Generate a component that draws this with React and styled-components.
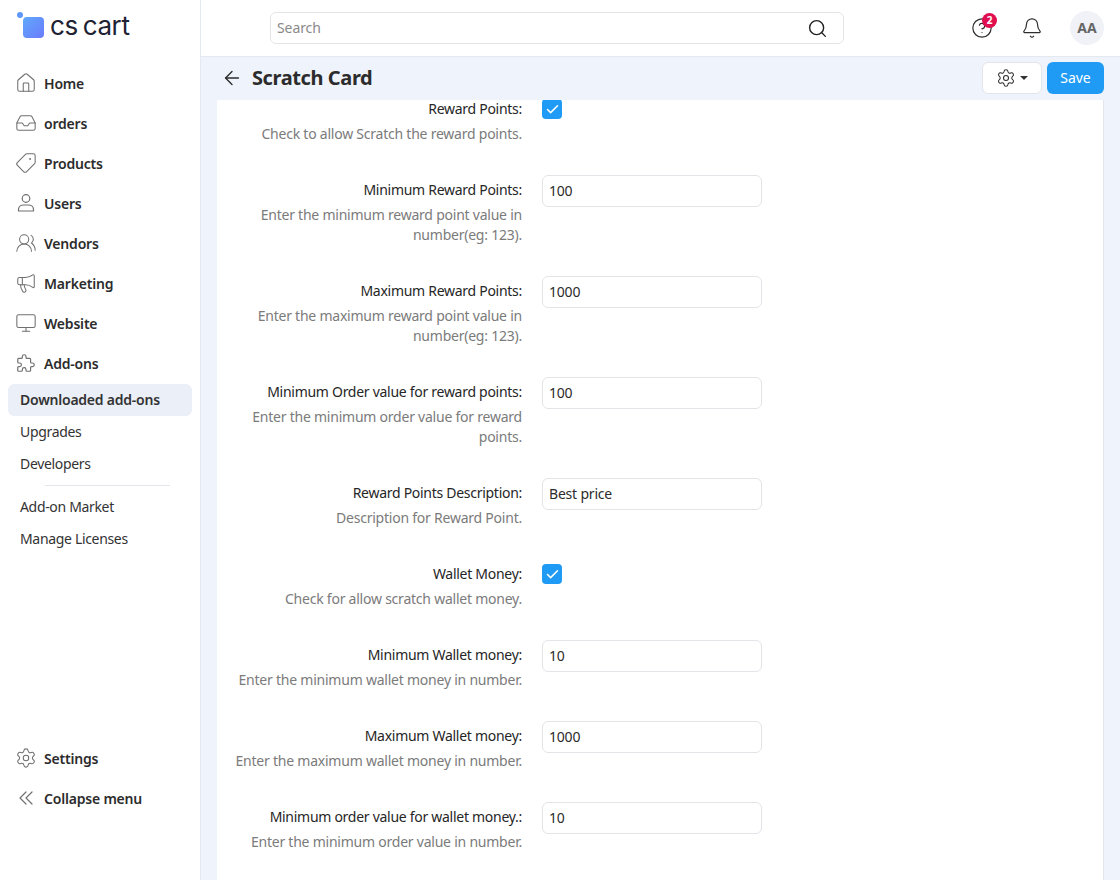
import React from 'react';
import styled, { createGlobalStyle } from 'styled-components';
import {
  House, Inbox, Tag, UsersRound, Megaphone, Monitor, Settings,
  Search, Bell, ArrowLeft, Check, CircleHelp,
} from 'lucide-react';

const GlobalStyle = createGlobalStyle`
  html, body { margin: 0; padding: 0; height: 100%; overflow: hidden; }
  body { font-family: "Noto Sans", "Open Sans", sans-serif; font-size: 14px; color: #2c2c2c; background: #fff; }
  #root { height: 100%; }
  * { box-sizing: border-box; }
`;

const Shell = styled.div`
  display: flex;
  height: 880px;
  width: 1120px;
`;

const Sidebar = styled.aside`
  width: 201px;
  flex: none;
  display: flex;
  flex-direction: column;
  background: #fff;
  border-right: 1px solid #e4e8f1;
  padding: 0 8px;
`;

const Logo = styled.div`
  height: 63px;
  display: flex;
  align-items: flex-start;
  padding: 10px 0 0 8px;
  gap: 6px;
`;

const LogoMark = styled.div`
  position: relative;
  width: 21px;
  height: 21px;
  margin: 7px 0 0 7px;
  border-radius: 4px;
  background: linear-gradient(135deg, #5fa9fb, #6b7bfb);

  &::before {
    content: '';
    position: absolute;
    left: -6px;
    top: -5px;
    width: 6px;
    height: 6px;
    border-radius: 50%;
    background: #5f97f7;
  }
`;

const LogoText = styled.span`
  font-family: Inter, sans-serif;
  font-size: 26px;
  line-height: 32px;
  letter-spacing: -0.4px;
  word-spacing: -2px;
  color: #1e2233;
`;

const NavItem = styled.div`
  display: flex;
  align-items: center;
  gap: 7px;
  height: 40px;
  padding-left: 7px;
  font-weight: 600;
  font-size: 14px;
  letter-spacing: -0.2px;
  color: #2c2c2c;

  svg { color: #707070; flex: none; }
`;

const SubList = styled.div`
  margin-top: 1px;
`;

const SubItem = styled.div`
  height: 32px;
  line-height: 32px;
  padding-left: 12px;
  border-radius: 6px;
  letter-spacing: ${props => (props.$active ? '-0.23px' : '-0.33px')};
  font-weight: ${props => (props.$active ? 600 : 400)};
  background: ${props => (props.$active ? '#ebeff7' : 'transparent')};
  color: #333;
`;

const SubDivider = styled.div`
  height: 1px;
  margin: 5px 22px 5px 37px;
  background: #e2e5ea;
`;

const Spacer = styled.div`
  flex: 1;
`;

const SidebarFooter = styled.div`
  padding-bottom: 62px;
`;

const Main = styled.div`
  flex: 1;
  min-width: 0;
  display: flex;
  flex-direction: column;
  background: #eff3fb;
`;

const Topbar = styled.header`
  height: 57px;
  flex: none;
  display: flex;
  align-items: center;
  background: #fff;
  border-bottom: 1px solid #e4e8f1;
  padding: 0 16px 0 69px;
`;

const SearchBox = styled.div`
  width: 574px;
  height: 32px;
  display: flex;
  align-items: center;
  justify-content: space-between;
  padding: 0 15px 0 6px;
  border: 1px solid #e2e4e8;
  border-radius: 6px;
  color: #8a8a8a;
  letter-spacing: -0.1px;
  svg { color: #222; }
`;

const SearchText = styled.span`
  margin-top: -2px;
`;

const TopIcons = styled.div`
  margin-left: auto;
  display: flex;
  align-items: center;
`;

const IconSlot = styled.div`
  position: relative;
  width: 22px;
  height: 22px;
  margin-right: ${props => props.$gap}px;
  color: #2c2c2c;
`;

const Badge = styled.span`
  position: absolute;
  top: -4px;
  left: 11px;
  width: 15px;
  height: 15px;
  border-radius: 50%;
  background: #df0f50;
  color: #fff;
  font-size: 10px;
  font-weight: 700;
  line-height: 15px;
  text-align: center;
`;

const Avatar = styled.div`
  width: 34px;
  height: 34px;
  border-radius: 50%;
  background: #f0f2f7;
  color: #666;
  font-weight: 700;
  font-size: 14px;
  line-height: 34px;
  text-align: center;
`;

const PageHeader = styled.div`
  height: 43px;
  flex: none;
  display: flex;
  align-items: center;
  gap: 9px;
  padding: 0 16px 2px 20px;
  svg { color: #2c2c2c; }
`;

const PageTitle = styled.h1`
  margin: 0;
  font-size: 20px;
  font-weight: 700;
  letter-spacing: -0.4px;
  color: #2c2c2c;
`;

const HeaderActions = styled.div`
  margin-left: auto;
  display: flex;
  gap: 5px;
`;

const GearButton = styled.div`
  width: 60px;
  height: 32px;
  display: flex;
  align-items: center;
  justify-content: center;
  gap: 4px;
  background: #fff;
  border: 1px solid #e2e5ec;
  border-radius: 6px;
`;

const Caret = styled.span`
  width: 0;
  height: 0;
  border-left: 4px solid transparent;
  border-right: 4px solid transparent;
  border-top: 4px solid #333;
`;

const SaveButton = styled.div`
  width: 57px;
  height: 32px;
  background: #1f9bf5;
  border-radius: 6px;
  color: #fff;
  line-height: 31px;
  text-align: center;
`;

const Content = styled.div`
  flex: 1;
  min-height: 0;
  overflow: hidden;
  margin: 0 16px;
  background: #fff;
  border-right: 1px solid #e3e6ee;
`;

const Form = styled.div`
  margin-top: -6px;
`;

const Row = styled.div`
  display: grid;
  grid-template-columns: 305px 220px;
  column-gap: 20px;
  padding-bottom: 31px;
`;

const LabelCol = styled.div`
  padding-left: 14px;
  text-align: right;
`;

const Label = styled.div`
  padding-top: 4px;
  line-height: 22px;
  font-size: 14px;
  letter-spacing: -0.28px;
  color: #262626;
`;

const Hint = styled.div`
  margin-top: 4px;
  line-height: 20px;
  letter-spacing: -0.23px;
  color: #7b7b7b;
`;

const Field = styled.div`
  height: 32px;
  padding: 0 6px;
  border: 1px solid #e2e4e8;
  border-radius: 6px;
  line-height: 30px;
  letter-spacing: -0.2px;
  color: #2c2c2c;
`;

const CheckBox = styled.div`
  width: 20px;
  height: 20px;
  margin-top: 5px;
  border-radius: 4px;
  background: #1f9bf5;
  color: #fff;
  display: flex;
  align-items: center;
  justify-content: center;
`;

const FlippedTag = styled(Tag)`
  transform: scaleX(-1);
`;

const LineIcon = ({ children }) => (
  <svg width="22" height="22" viewBox="0 0 22 22" fill="none" stroke="currentColor" strokeWidth="1.2" strokeLinecap="round" strokeLinejoin="round">
    {children}
  </svg>
);

const UserIcon = () => (
  <LineIcon>
    <circle cx="11" cy="6.5" r="3.8" />
    <path d="M3.5 19v-1.6c0-2.6 2.3-4.4 5-4.4h5c2.7 0 5 1.8 5 4.4V19z" />
  </LineIcon>
);

const PuzzleIcon = () => (
  <svg width="22" height="22" viewBox="0 0 24 24" fill="none" stroke="currentColor" strokeWidth="1.3" strokeLinecap="round" strokeLinejoin="round">
    <path d="M4 7h3a1 1 0 0 0 1-1v-1a2 2 0 0 1 4 0v1a1 1 0 0 0 1 1h3a1 1 0 0 1 1 1v3a1 1 0 0 0 1 1h1a2 2 0 0 1 0 4h-1a1 1 0 0 0-1 1v3a1 1 0 0 1-1 1h-3a1 1 0 0 1-1-1v-1a2 2 0 0 0-4 0v1a1 1 0 0 1-1 1h-3a1 1 0 0 1-1-1v-3a1 1 0 0 1 1-1h1a2 2 0 0 0 0-4h-1a1 1 0 0 1-1-1v-3a1 1 0 0 1 1-1" />
  </svg>
);

const CollapseIcon = () => (
  <LineIcon>
    <path d="M11 5l-6 6 6 6" />
    <path d="M17 5l-6 6 6 6" />
  </LineIcon>
);

const navTop = [
  ['Home', <House size={22} strokeWidth={1.15} />],
  ['orders', <Inbox size={22} strokeWidth={1.15} />],
  ['Products', <FlippedTag size={22} strokeWidth={1.15} />],
  ['Users', <UserIcon />],
  ['Vendors', <UsersRound size={22} strokeWidth={1.15} />],
  ['Marketing', <Megaphone size={22} strokeWidth={1.15} />],
  ['Website', <Monitor size={22} strokeWidth={1.15} />],
  ['Add-ons', <PuzzleIcon />],
];

const rows = [
  { label: 'Reward Points:', hint: 'Check to allow Scratch the reward points.', check: true },
  { label: 'Minimum Reward Points:', hint: 'Enter the minimum reward point value in number(eg: 123).', value: '100' },
  { label: 'Maximum Reward Points:', hint: 'Enter the maximum reward point value in number(eg: 123).', value: '1000' },
  { label: 'Minimum Order value for reward points:', hint: 'Enter the minimum order value for reward points.', value: '100' },
  { label: 'Reward Points Description:', hint: 'Description for Reward Point.', value: 'Best price' },
  { label: 'Wallet Money:', hint: 'Check for allow scratch wallet money.', check: true },
  { label: 'Minimum Wallet money:', hint: 'Enter the minimum wallet money in number.', value: '10' },
  { label: 'Maximum Wallet money:', hint: 'Enter the maximum wallet money in number.', value: '1000' },
  { label: 'Minimum order value for wallet money.:', hint: 'Enter the minimum order value in number.', value: '10' },
];

const App = () => (
  <Shell>
    <GlobalStyle />
    <Sidebar>
      <Logo>
        <LogoMark />
        <LogoText>cs cart</LogoText>
      </Logo>
      {navTop.map(([name, icon]) => (
        <NavItem key={name}>
          {icon}
          {name}
        </NavItem>
      ))}
      <SubList>
        <SubItem $active>Downloaded add-ons</SubItem>
        <SubItem>Upgrades</SubItem>
        <SubItem>Developers</SubItem>
        <SubDivider />
        <SubItem>Add-on Market</SubItem>
        <SubItem>Manage Licenses</SubItem>
      </SubList>
      <Spacer />
      <SidebarFooter>
        <NavItem><Settings size={22} strokeWidth={1.15} />Settings</NavItem>
        <NavItem><CollapseIcon />Collapse menu</NavItem>
      </SidebarFooter>
    </Sidebar>
    <Main>
      <Topbar>
        <SearchBox>
          <SearchText>Search</SearchText>
          <Search size={21} strokeWidth={1.6} />
        </SearchBox>
        <TopIcons>
          <IconSlot $gap={28}>
            <CircleHelp size={22} strokeWidth={1.3} />
            <Badge>2</Badge>
          </IconSlot>
          <IconSlot $gap={27}>
            <Bell size={22} strokeWidth={1.3} />
          </IconSlot>
          <Avatar>AA</Avatar>
        </TopIcons>
      </Topbar>
      <PageHeader>
        <ArrowLeft size={22} strokeWidth={1.5} />
        <PageTitle>Scratch Card</PageTitle>
        <HeaderActions>
          <GearButton>
            <Settings size={20} strokeWidth={1.25} />
            <Caret />
          </GearButton>
          <SaveButton>Save</SaveButton>
        </HeaderActions>
      </PageHeader>
      <Content>
        <Form>
          {rows.map(row => (
            <Row key={row.label}>
              <LabelCol>
                <Label>{row.label}</Label>
                <Hint>{row.hint}</Hint>
              </LabelCol>
              {row.check ? (
                <CheckBox><Check size={15} strokeWidth={2.5} /></CheckBox>
              ) : (
                <Field>{row.value}</Field>
              )}
            </Row>
          ))}
        </Form>
      </Content>
    </Main>
  </Shell>
);

export default App;
